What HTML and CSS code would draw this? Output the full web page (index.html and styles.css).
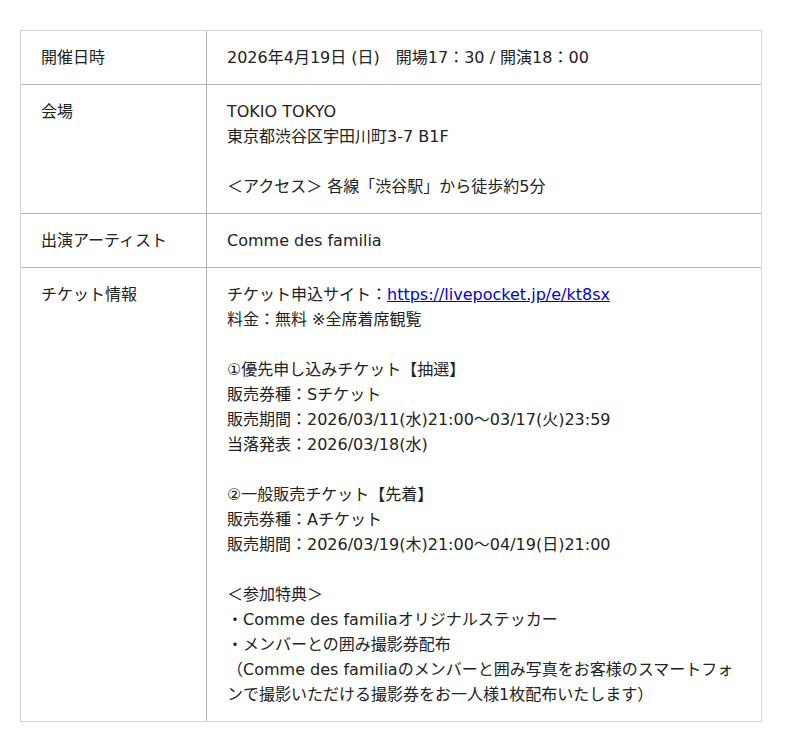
FILE: index.html
```html
<!DOCTYPE html>
<html lang="ja">
<head>
<meta charset="utf-8">
<title>公演情報</title>
<link rel="stylesheet" href="styles.css">
</head>
<body>
<div class="info">
  <div class="label">開催日時</div>
  <div class="value">2026年4月19日 (日)　開場17：30 / 開演18：00</div>

  <div class="label">会場</div>
  <div class="value">TOKIO TOKYO<br>東京都渋谷区宇田川町3-7 B1F<br><br>＜アクセス＞ 各線「渋谷駅」から徒歩約5分</div>

  <div class="label">出演アーティスト</div>
  <div class="value">Comme des familia</div>

  <div class="label last">チケット情報</div>
  <div class="value last">チケット申込サイト：<a href="#">https://livepocket.jp/e/kt8sx</a><br>料金：無料 ※全席着席観覧<br><br>①優先申し込みチケット【抽選】<br>販売券種：Sチケット<br>販売期間：2026/03/11(水)21:00～03/17(火)23:59<br>当落発表：2026/03/18(水)<br><br>②一般販売チケット【先着】<br>販売券種：Aチケット<br>販売期間：2026/03/19(木)21:00～04/19(日)21:00<br><br>＜参加特典＞<br>・Comme des familiaオリジナルステッカー<br>・メンバーとの囲み撮影券配布<br>（Comme des familiaのメンバーと囲み写真をお客様のスマートフォンで撮影いただける撮影券をお一人様1枚配布いたします）</div>
</div>
</body>
</html>
```

FILE: styles.css
```css
html, body {
  margin: 0;
  padding: 0;
  background: #ffffff;
}

body {
  padding: 30px 38px 30px 20px;
  font-family: "DejaVu Sans", "Noto Sans CJK JP", sans-serif;
  font-size: 16px;
  line-height: 25px;
  color: #222222;
}

.info {
  width: 740px;
  display: grid;
  grid-template-columns: 186px 1fr;
  border: 1px solid #d6d6d6;
}

.label,
.value {
  padding: 14px 20px;
  border-bottom: 1px solid #b4b4b4;
}

.label {
  border-right: 1px solid #b4b4b4;
}

.label.last,
.value.last {
  border-bottom: none;
}

.value a {
  color: #0000ee;
  text-decoration: underline;
}
```
